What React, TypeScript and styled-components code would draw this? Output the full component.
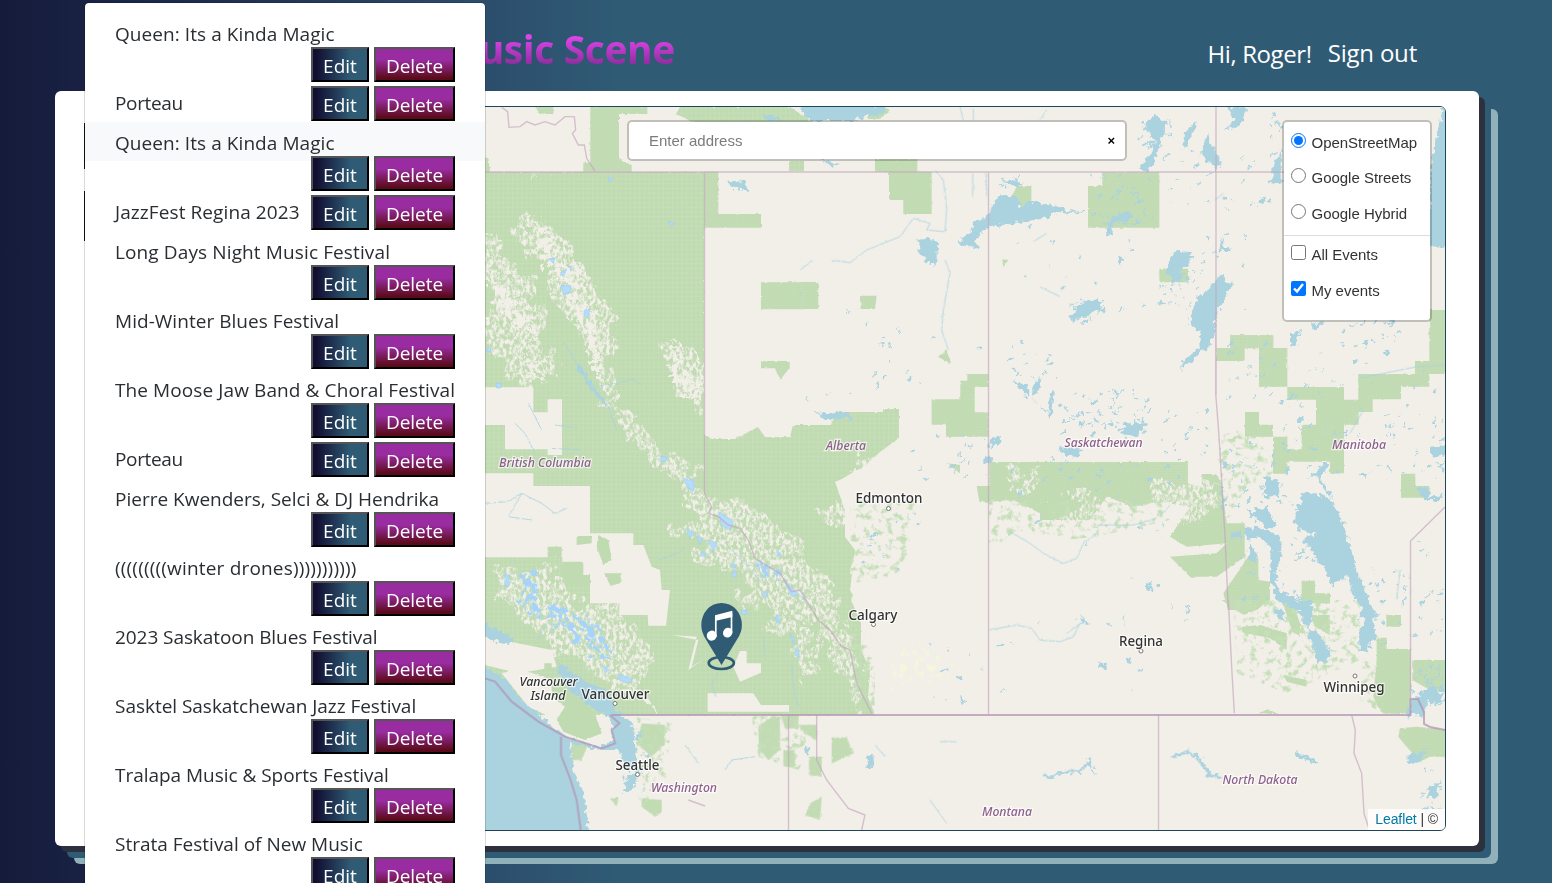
import React from "react";
import styled, { createGlobalStyle } from "styled-components";

const GlobalStyle = createGlobalStyle`
  * { box-sizing: border-box; }
  body { margin: 0; overflow: hidden; font-family: "Open Sans", "Noto Sans", sans-serif; }
`;

const Page = styled.div`
  position: relative;
  width: 1552px;
  height: 883px;
  overflow: hidden;
  background: linear-gradient(90deg, #151b3b 0, #1f2c4f 200px, #2c4d6c 480px, #2f5b75 620px);
`;

const Header = styled.header`
  height: 91px;
  padding: 6px 135px 0 430px;
  display: flex;
  align-items: center;
  justify-content: space-between;
`;

const Brand = styled.h1`
  margin: 0;
  width: 245px;
  display: flex;
  justify-content: flex-end;
  white-space: nowrap;
  font-size: 39px;
  line-height: 54px;
  font-weight: 700;
  letter-spacing: -0.4px;
  background: linear-gradient(180deg, #dd45ea 22%, #dd45ea 28%, #8e2c9c 80%);
  background-clip: text;
  -webkit-background-clip: text;
  color: transparent;
`;

const Account = styled.nav`
  display: flex;
  gap: 16px;
  padding-top: 9px;
  color: #fff;
  font-size: 24px;
  line-height: 32px;
  white-space: nowrap;
`;

const Greeting = styled.span`
  padding-top: 1px;
  letter-spacing: -0.4px;
`;

const SignOut = styled.span`
  letter-spacing: -0.2px;
`;

const Card = styled.main`
  width: 1424px;
  height: 755px;
  margin-left: 55px;
  padding: 15px 33px 15px;
  border-radius: 6px;
  background: #fff;
  box-shadow: 6px 6px #2d303d, 12px 12px #2f5b75, 19px 18px #90b1b9;
`;

const MapFrame = styled.section`
  position: relative;
  height: 725px;
  border: 1px solid #20455a;
  border-radius: 6px;
  overflow: hidden;
  background: #f2efe9;
  font-family: "Liberation Sans", Arial, sans-serif;
`;

const MapCanvas = styled.svg`
  display: block;
  width: 1356px;
  height: 723px;
`;

const SearchBox = styled.div`
  position: absolute;
  top: 13px;
  left: 538px;
  width: 500px;
  height: 41px;
  padding: 0 10px 0 20px;
  display: flex;
  align-items: center;
  justify-content: space-between;
  border: 2px solid rgba(0, 0, 0, 0.2);
  border-radius: 5px;
  background: #fff;
  background-clip: padding-box;
  color: #7c7c7c;
  font-size: 15px;
`;

const ClearMark = styled.span`
  color: #000;
  font-size: 13px;
  font-weight: 700;
`;

const LayerPanel = styled.form`
  position: absolute;
  top: 13px;
  right: 13px;
  width: 150px;
  height: 202px;
  border: 2px solid rgba(0, 0, 0, 0.2);
  border-radius: 5px;
  background: #fff;
  background-clip: padding-box;
  color: #333;
  font-size: 15px;
`;

const LayerGroup = styled.div<{ $divided?: boolean }>`
  display: flex;
  flex-direction: column;
  gap: 11.4px;
  padding: ${(p) => (p.$divided ? "7.5px 7px" : "9px 7px 9.2px")};
  border-top: ${(p) => (p.$divided ? "1px solid #ddd" : "none")};
`;

const LayerOption = styled.label`
  display: flex;
  align-items: flex-start;
  height: 24px;
  line-height: 24px;
  letter-spacing: -0.02px;
  white-space: nowrap;
  input { width: 15px; height: 15px; margin: 2px 5.5px 0 0; flex: none; }
`;

const Attribution = styled.div`
  position: absolute;
  right: 0;
  bottom: 0;
  padding: 0 7px 1px 7px;
  background: rgba(255, 255, 255, 0.8);
  color: #333;
  font-size: 14px;
  line-height: 20px;
  letter-spacing: -0.1px;
  white-space: nowrap;
  span { color: #0078a8; }
`;

const HiddenControl = styled.span<{ $top: number; $height: number }>`
  position: absolute;
  left: 84px;
  top: ${(p) => p.$top}px;
  width: 20px;
  height: ${(p) => p.$height}px;
  background: #111;
`;

const Menu = styled.ul`
  position: absolute;
  top: 2px;
  left: 84px;
  width: 402px;
  height: 900px;
  margin: 0;
  padding: 10px 0 0;
  list-style: none;
  border: 1px solid rgba(0, 0, 0, 0.15);
  border-radius: 5px;
  background: #fff;
  background-clip: padding-box;
`;

const MenuRow = styled.li<{ $wrapped: boolean }>`
  display: flex;
  flex-wrap: wrap;
  justify-content: space-between;
  align-content: flex-start;
  height: ${(p) => (p.$wrapped ? 69 : 40)}px;
`;

const EventName = styled.span<{ $active?: boolean; $wrapped: boolean; $track: number }>`
  width: ${(p) => (p.$wrapped ? "100%" : "226px")};
  height: 39px;
  padding-left: 30px;
  line-height: 42px;
  font-size: 19px;
  letter-spacing: ${(p) => p.$track}px;
  color: #2a2e32;
  white-space: nowrap;
  background: ${(p) => (p.$active ? "#f8f9fa" : "transparent")};
`;

const Actions = styled.div<{ $wrapped: boolean }>`
  margin: ${(p) => (p.$wrapped ? "-5px 30px 0 auto" : "4px 30px 0 0")};
  height: 35px;
  display: flex;
  gap: 5px;
`;

const ActionButton = styled.button<{ $kind: "edit" | "delete" }>`
  width: ${(p) => (p.$kind === "edit" ? 58 : 81)}px;
  height: 35px;
  padding: 2px 0 0;
  border: 2px outset #000;
  border-color: #555 #000 #000 #555;
  background: ${(p) =>
    p.$kind === "edit"
      ? "linear-gradient(90deg, #110e31 5%, #2f5b75 70%)"
      : "linear-gradient(180deg, #9a2ca2 35%, #5a0a18 96%)"};
  color: #fff;
  font-family: "Open Sans", "Noto Sans", sans-serif;
  font-size: 19px;
  font-weight: 500;
  line-height: 28px;
  letter-spacing: ${(p) => (p.$kind === "edit" ? 0 : -0.05)}px;
  text-align: center;
  white-space: nowrap;
`;

type Piece = [frame: keyof typeof frames, d: string];

const frames = {
  page: "",
  nw: "translate(485 100) scale(.33333)",
  mid: "translate(800 150) scale(.33333)",
  east: "translate(1150 310) scale(.33333)",
  sw: "translate(485 450) scale(.33333)",
  south: "translate(850 500) scale(.33333)",
  se: "translate(1200 600) scale(.33333)",
  ne: "translate(860 100) scale(.33333)",
};

const forests: Piece[] = [
  ["page", "M470 172H704V434L712 439H735L758 427L765 437H790L793 425H831L836 412H883V409H899V438L880 452L866 465L840 480L845 510V537L857 547L850 570L855 590L851 600L861 623V650L870 670L868 697L875 715H470Z"],
  ["nw", "M150 20H205V42H165ZM316 20H487V42H402V178L440 195V215H295V188H316ZM658 215H700V342H828V383H658ZM828 547H960V628H828ZM828 783H914V803L885 840L870 805H828ZM-9 175L10 172L15 215H-9Z"],
  ["page", "M680 107H790L822 128H705L676 114ZM789 161H804V171H789ZM868 115L884 107L890 110L880 119H868Z"],
  ["ne", "M45 178H172V215H45ZM87 215H215V342H130V300H87ZM0 587H50L45 627H2V600H0ZM684 258H727V217H898V383H684ZM898 506H984V547H898ZM471 258H514V300L490 325L455 290ZM427 478L445 480L430 502ZM1111 706H1240V745H1111Z"],
  ["mid", "M0 396H55V477H0ZM481 692H502V672H565V711H524V787H565V860H438V824H395V748H481ZM414 620L440 600L453 642ZM568 936H1163V1008L1200 1010V1070L1100 1050L1000 1070L920 1040L870 1110H720V1090L640 1050L568 1055ZM530 1008H568V1055H538ZM440 940L480 945V970Z"],
  ["east", "M198 114H241V76H369V114H412V230H327V114H284V153H198ZM412 231H582V269H625V192H795V153H838V0H900V153L882 192H838V230H753V268H668V306H626V344H582V490H540V455H412V491H369V380H285V344H369V380H412V418H455V344H498V269H412ZM285 306H327V344H285ZM753 491H796V528H838V563H753ZM0 456H113V520L155 530L157 492H197L215 520L230 640H284V740L200 800H120L60 740L200 730L230 700L110 710L60 680L120 590L0 570ZM295 740L325 745V810L360 815V870L320 900H235L220 850ZM455 812H495V850H540V880H455Z"],
  ["se", "M127 80L180 75L260 100V150L210 115L127 97ZM65 0H170V30L130 45ZM245 0H275L300 70V110L275 90ZM330 45H389V105L345 80ZM559 45H603V80H559ZM530 113H560V147H632V343L545 340L520 290L530 180ZM637 180H750V280L690 270L637 240ZM600 385L650 380L750 390V470H690L660 485L620 440L595 410ZM175 340L205 328L235 342ZM250 225L320 240V260L260 245ZM350 0H389V10H350Z"],
  ["sw", "M470 820L540 825V880L500 920L455 880ZM260 870L310 880L290 930H260ZM470 1045L530 1050V1090L510 1100L470 1070ZM820 830L860 800H885V900L850 930L822 900ZM880 770H940V835H900ZM940 825H995V870L960 850ZM972 920H1010V980L972 975ZM1040 862H1085L1105 910L1040 940ZM975 1060L1010 1040L1005 1110L960 1095ZM895 900H930V950H895ZM375 1045L400 1042L395 1070Z"],
];

const clearings: Piece[] = [
  ["nw", "M0 862H145V937H188V898H231V1065H188V1048H60V975H0Z"],
  ["sw", "M0 70H145V108H315V250H445V285H475L500 350L525 360L530 420H555L543 527H490L488 495H403V460H315V375H295V340H232V320L190 322H0ZM765 603H785V640H828V668L765 695L745 650ZM668 730H805L828 765H912V785H668ZM0 560L200 600L215 650L100 670L0 645Z"],
  ["sw", "M1050 95L1200 40V480H1130L1095 420L1110 300L1080 260V180ZM610 660L635 560L560 555L640 570L620 650L660 625Z"],
];

const islands: Piece[] = [["sw", "M50 670L100 655L200 690L270 750L340 800L358 850L300 875L230 850L215 810L130 770L90 720Z"]];
const islandForest: Piece[] = [["sw", "M200 705L240 710L330 790L350 850L300 870L235 845L215 810L240 770L200 740ZM275 258H320V280L275 285ZM188 290H230V322H188ZM232 335H293V375H315V408H255L232 380ZM340 255L370 270L380 330L355 345L335 290ZM360 370H410L405 400L375 408ZM178 640H200V660H178Z"]];

const mountains: Piece[] = [
  ["nw", "M180 230H198L190 275ZM110 335L160 350L215 400L290 480L330 570L390 640L395 740L350 780L380 900L450 960L600 1100L540 1110L410 980L350 890L310 740L240 640L190 540L90 420ZM0 400L90 480L190 720L200 850L120 850L0 780ZM560 720L600 740L658 800V930L600 900L560 850Z"],
  ["sw", "M500 0L620 60L700 150L860 200L990 330L1080 480L1110 620L1150 790L1100 740L1040 590L930 480L800 400L690 330L560 240L640 210L600 130ZM20 350L160 350L250 440L400 480L500 560L480 700L500 780L400 740L300 650L200 590L60 470ZM740 300L820 400L990 570L970 700L880 560L760 420Z"],
  ["mid", "M150 960L230 930L300 1000L250 1110H60ZM640 980L740 960L720 1000L650 1030ZM760 1060L880 1040L1000 1080L1200 1050V1110H740Z"],
  ["east", "M0 540L120 520L220 560L120 590L60 640L0 600Z"],
];

const snowfields: Piece[] = [
  ["nw", "M120 345L150 350L165 385L150 385ZM165 355L195 390L225 440L210 490L290 490L300 550L260 560L230 520L190 520L170 440ZM560 720L590 750L600 800L658 850V905L600 880L565 850L575 790ZM20 530L70 560L130 640L170 720L120 700L40 610ZM120 770L180 810L185 850L140 830Z"],
  ["nw", "M240 590L290 570L330 640L350 760L360 860L330 800L310 700Z"],
];

const sparse: Piece[] = [
  ["south", "M0 0H200L160 230L40 240L0 260ZM415 0H960V60L740 110L640 120L500 90L415 160ZM0 400H40L75 500V640L0 620Z"],
  ["se", "M100 0H480V180L350 240L260 280L110 220ZM490 160L530 180V330L480 300Z"],
  ["east", "M203 380L290 355L369 440V490L290 530L230 640L200 560Z"],
  ["sw", "M440 800L560 820L540 1000L470 1080L440 960ZM800 800L900 790L1000 850L940 960L820 920Z"],
];

const water: Piece[] = [
  ["sw", "M-30 635L0 650L60 685L110 745L160 790L225 850L340 890L385 870L375 800L310 765L250 720L215 660L225 640L300 695L370 720L385 775L440 820L450 880L455 940L430 960L400 900H350L255 880L265 960L300 1045L310 1150H-30ZM-20 520L0 520L85 565V585L40 575L-20 550ZM420 990L470 950L440 1020L415 1030Z"],
  ["mid", "M468 280L505 255L520 215L550 210L600 135L645 140L665 172L695 155L760 165L800 180L858 183V189L770 186L740 205L665 215L625 222L565 232L525 270L535 298L505 290ZM355 270L385 262L418 285L410 300L410 343L390 345L360 310ZM45 787L95 790L120 783L145 787L158 810L120 805L75 810ZM640 688L680 705L690 745L675 735ZM700 690L725 685L715 730L700 735ZM970 820L1040 820L1010 860H970ZM1120 310L1175 300L1165 345L1140 360L1150 390L1115 395L1100 350ZM930 210L960 190L990 185L995 205L940 220L930 260L920 240ZM810 500L850 455L900 450V480L820 515ZM750 730L765 720L755 805L690 740L745 790ZM575 870L600 857L605 880L565 890ZM550 920L575 920V940L550 935ZM955 325L975 320L960 352ZM780 890L850 900L830 925L775 905Z"],
  ["ne", "M0 20H78L70 40L0 50ZM860 70L885 40L920 75L905 115L880 190L855 220L840 205L875 160L885 110L850 90ZM965 150L975 95L1010 60L1005 90ZM1020 165L1040 105L1060 140L1083 190L1070 215L1050 185ZM1090 90L1130 60L1100 22H1160L1140 75ZM1230 250L1240 200L1265 150V250ZM1075 455L1090 405V440L1118 450ZM990 650L1015 590L1050 565L1085 520L1110 560L1090 610L1070 635L1065 700L1040 750H1015L1025 700L1000 680ZM430 240L490 245L470 265Z"],
  ["page", "M804 100H878L868 117L850 121H812L801 112ZM761 114L778 117L782 121H768ZM727 182L745 180L748 191L735 189ZM821 160L841 163L832 166ZM1430 175L1442 107L1455 100V245L1430 247Z"],
  ["east", "M125 0H190L195 50L185 100L150 130L105 165L90 190L105 150L150 110L160 70ZM455 550L500 547L550 575L590 670L620 780L640 830L665 900H640L605 850L595 800L545 825L530 780L500 750L463 685L500 670L440 660L435 630ZM525 460H540L510 500L550 570L520 535L500 500H480ZM290 605L350 590L380 650L350 655ZM283 655L320 650L390 680L395 740L375 780L385 840L430 860L470 900H440L380 870L360 800L365 720L325 680L290 690ZM840 410L885 405V440L840 435ZM800 535L835 530L840 560L880 555V570L820 570ZM420 75L450 60L440 110L420 105ZM620 490L660 488L645 508ZM345 500L385 510V560L345 565ZM490 40L520 30V45L490 65ZM300 700L320 730V760L300 750Z"],
  ["se", "M325 85L355 100L392 155L385 185L345 188V155L325 110ZM500 0L535 55L520 60L530 120L510 125L505 160L478 155V90L500 55H475ZM222 15L250 40L252 65L230 50ZM300 0H330L340 60L320 90L300 40ZM620 340L640 300L700 250L730 300L700 310L680 300L670 350L640 335L625 360ZM622 470L665 450L685 448L665 470V488H625ZM680 570L720 540L710 590H685ZM285 455L310 465L355 480V490L290 470Z"],
  ["south", "M740 490L770 492V510L755 508ZM885 250L900 245L905 270L890 272ZM915 250L930 250V260L915 262ZM50 770L70 765L72 808L50 805ZM690 345L720 375L700 370ZM330 590L342 600L335 612ZM1145 95H1170V118H1145ZM1180 80L1200 90V130ZM820 330L822 370L838 400L820 370ZM700 785L725 775L735 830L725 800Z"],
  ["sw", "M1150 920L1165 915V960L1150 955ZM955 890L975 895L970 920L960 905Z"],
];

const rivers: Piece[] = [
  ["nw", "M235 725L275 790L320 860L370 920L395 990M320 860L400 850L440 838L470 855M130 910L170 990M90 970L120 1000L150 1060M210 975L280 985M200 1045L285 1050M305 815V850"],
  ["sw", "M0 160L70 155L110 130L170 160L210 190L245 175M110 130L70 200L140 210M300 480L310 520M835 560L840 620M920 640L930 740L940 765M700 670L680 700L692 740M190 510L160 570M520 330L580 310L600 290M730 290L790 350L830 400M600 885L640 940M720 960L740 930L810 920"],
  ["mid", "M95 330L150 338L200 300L300 260L340 205L390 220L380 240L435 245L440 180L430 90L405 60M435 330L450 370L430 480L425 540L445 600M0 360L40 330"],
  ["ne", "M560 400L520 425M540 560L600 590M1065 300L1090 280M300 20L310 60M340 25V60M540 60L560 30M338 220V290M378 220L380 290"],
  ["south", "M480 95L540 130L580 160L640 190L680 175L700 130L745 95M415 390L500 375L545 385L570 420L630 425L670 410L690 370L715 370M650 400L700 365M965 770L1020 755L1050 790L1080 825L1130 835M270 725H320M240 900L290 970M930 50L960 15M740 75L850 75L920 55M75 735L105 770"],
  ["east", "M625 205L700 190L800 170L885 165M750 780L740 870M640 300L600 370"],
];

const channels: Piece[] = [
  ["nw", "M275 790L320 860L370 920"],
  ["south", "M580 825L600 835L640 815L690 815L720 780M965 770L1020 755L1050 780L1080 825L1115 835"],
];

const provinces: Piece[] = [
  ["page", "M485 172H1284M704.5 172V494M988.5 172V714M1216 107V395M1158.5 715V830M788.5 715V830M1410.5 698V541L1445 507"],
  ["nw", "M50 22L68 35L72 82L105 80L125 65L150 75L180 65L210 75L240 50L268 50L272 90L262 100L280 135H298L305 175L330 213"],
  ["sw", "M658 130L680 170L670 190L700 200L730 225L765 235L790 270L810 325L850 350L885 370L920 425L945 420L1000 510L1035 540L1070 590L1095 600L1115 700L1160 790M995 795V930L1025 990L1090 1075L1140 1095L1130 1140M610 1050L660 1068"],
  ["east", "M197 0V250L205 350L212 460L225 680L235 900"],
  ["se", "M85 0L95 200L103 340M455 345L466 390L462 460L485 520L492 640L505 680"],
];

const countries: Piece[] = [
  ["page", "M611 715H1410.5V699L1418 699L1424 712V724L1430 727L1445 730"],
  ["sw", "M375 795L403 820L380 840L390 880L350 895L240 860L160 815L80 755L30 695L0 685M228 860V915L255 985L275 1050L287 1140"],
];

const glaciers: Piece[] = [
  ["nw", "M193 476L210 474L205 490ZM225 520L245 508L235 530ZM250 498L262 500L255 510ZM228 557H258V575L235 583ZM298 632L315 628L308 655L298 645ZM5 745H18V755H8ZM33 850H48V864H35ZM550 365L568 370L560 380ZM528 1070H544V1083H528ZM370 233H382V243H370Z"],
  ["sw", "M60 375H72V408H60ZM355 645L372 660L360 668ZM400 672L440 688L438 698L405 692ZM595 85L625 90L628 122L610 115ZM605 240L625 245L615 265ZM670 270L695 280L685 305ZM635 255L650 265L645 285ZM700 185L745 215L735 240L710 225ZM875 300L890 315L880 320ZM740 335L752 345L740 380L755 380ZM900 395L940 430L920 440ZM945 435L970 460ZM835 425H845V440H835ZM870 500L885 495L880 525ZM935 590L945 625L930 610ZM915 550L928 565V588ZM648 305L668 312L650 320ZM770 480H785V492H770Z"],
];

const icefields: Piece[] = [
  ["sw", "M105 365L160 360V410L165 440L175 515L145 515L135 475L95 465L125 420ZM185 465L230 460L285 500L345 522L360 560L390 610L365 628L315 620L320 580L260 582L270 560L245 530L205 545Z"],
  ["sw", "M810 325L850 345L905 370L885 395L830 375Z"],
];

function Shapes({ items }: { items: Piece[] }) {
  return (
    <>
      {items.map(([frame, d], i) => (
        <path key={i} d={d} transform={frames[frame] || undefined} vectorEffect="non-scaling-stroke" />
      ))}
    </>
  );
}

/* x, y, width, height, number of ponds */
const pondZones: number[][] = [
  [1060, 390, 90, 45, 60], [1010, 340, 50, 40, 20], [1160, 410, 50, 50, 22], [1220, 440, 70, 70, 50],
  [1370, 400, 74, 80, 40], [1290, 500, 30, 60, 20], [1270, 110, 12, 80, 16], [1140, 110, 35, 50, 24],
  [1170, 150, 110, 60, 22], [1160, 250, 45, 60, 34], [1000, 460, 190, 40, 32], [1280, 385, 80, 90, 36],
  [1225, 340, 60, 60, 22], [1240, 540, 60, 60, 26], [1410, 660, 34, 50, 50], [1400, 540, 44, 100, 24],
  [1420, 770, 25, 40, 12], [910, 430, 80, 50, 18], [860, 330, 120, 60, 14], [800, 290, 100, 110, 12],
  [1090, 175, 68, 50, 36], [1070, 300, 34, 22, 24], [860, 510, 60, 60, 15], [1000, 220, 150, 90, 16],
  [620, 730, 28, 60, 30], [1000, 520, 200, 110, 16], [1290, 350, 150, 50, 18], [1340, 320, 60, 30, 18],
  [995, 175, 35, 15, 14], [1170, 230, 80, 100, 14], [900, 640, 250, 60, 16], [1360, 565, 40, 80, 20],
];

function seeded(seed: number) {
  let s = seed;
  return () => {
    s = (s * 16807) % 2147483647;
    return s / 2147483647;
  };
}

const ponds = pondZones.flatMap(([x, y, w, h, n], z) => {
  const rand = seeded(71 + z * 997);
  return Array.from({ length: n }, () => ({
    cx: x + rand() * w,
    cy: y + rand() * h,
    rx: 0.7 + rand() * rand() * 3.6,
    ry: 0.5 + rand() * 1.1,
    turn: -60 + rand() * 50,
  }));
});

const places: { x: number; y: number; name: string; kind: "city" | "province" | "island"; dot?: [number, number]; width: number }[] = [
  { x: 545, y: 467, name: "British Columbia", kind: "province", width: 92 },
  { x: 846, y: 450, name: "Alberta", kind: "province", width: 40 },
  { x: 1103.5, y: 447, name: "Saskatchewan", kind: "province", width: 78 },
  { x: 1359, y: 448.5, name: "Manitoba", kind: "province", width: 54 },
  { x: 684, y: 792, name: "Washington", kind: "province", width: 66 },
  { x: 1007, y: 816, name: "Montana", kind: "province", width: 50 },
  { x: 1260, y: 784, name: "North Dakota", kind: "province", width: 75 },
  { x: 548.5, y: 685.5, name: "Vancouver", kind: "island", width: 58 },
  { x: 548, y: 700, name: "Island", kind: "island", width: 35 },
  { x: 889, y: 503, name: "Edmonton", kind: "city", dot: [888.5, 508.5], width: 67 },
  { x: 873, y: 619.5, name: "Calgary", kind: "city", dot: [873.5, 624.5], width: 49 },
  { x: 1141, y: 646, name: "Regina", kind: "city", dot: [1141, 651], width: 44 },
  { x: 615.5, y: 698.5, name: "Vancouver", kind: "city", dot: [615, 703.5], width: 68 },
  { x: 637.5, y: 769.5, name: "Seattle", kind: "city", dot: [637.5, 774.5], width: 44 },
  { x: 1354, y: 691.5, name: "Winnipeg", kind: "city", dot: [1355, 676], width: 61 },
];

function RegionMap() {
  return (
    <MapCanvas viewBox="89 107 1356 723">
      <defs>
        <pattern id="grid" width="4.7" height="4.7" patternUnits="userSpaceOnUse">
          <path d="M0 0H4.7M0 0V4.7" stroke="#e3edd6" strokeWidth=".8" opacity=".4" />
        </pattern>
        <filter id="shore" x="0" y="0" width="100%" height="100%">
          <feTurbulence type="fractalNoise" baseFrequency=".2" numOctaves="2" seed="4" />
          <feDisplacementMap in="SourceGraphic" scale="9" xChannelSelector="R" yChannelSelector="G" />
        </filter>
        <filter id="edge" x="0" y="0" width="100%" height="100%">
          <feTurbulence type="fractalNoise" baseFrequency=".25" numOctaves="2" seed="9" />
          <feDisplacementMap in="SourceGraphic" scale="2.5" xChannelSelector="R" yChannelSelector="G" />
        </filter>
        <filter id="ridges" x="-5%" y="-5%" width="110%" height="110%">
          <feTurbulence type="fractalNoise" baseFrequency=".3 .2" numOctaves="4" seed="7" result="n" />
          <feTurbulence type="fractalNoise" baseFrequency=".04" numOctaves="3" seed="3" result="w" />
          <feColorMatrix in="n" values="0 0 0 0 0 0 0 0 0 0 0 0 0 0 0 3 3 0 0 -2.6" result="m" />
          <feDisplacementMap in="SourceGraphic" in2="w" scale="50" xChannelSelector="R" yChannelSelector="B" result="s" />
          <feComposite in="s" in2="m" operator="in" />
        </filter>
        <filter id="snow" x="-5%" y="-5%" width="110%" height="110%">
          <feTurbulence type="fractalNoise" baseFrequency=".18" numOctaves="4" seed="17" result="n" />
          <feColorMatrix in="n" values="0 0 0 0 0 0 0 0 0 0 0 0 0 0 0 6 0 0 0 -2.2" result="m" />
          <feDisplacementMap in="SourceGraphic" in2="n" scale="24" xChannelSelector="R" yChannelSelector="B" result="s" />
          <feComposite in="s" in2="m" operator="in" />
        </filter>
        <filter id="ice" x="-5%" y="-5%" width="110%" height="110%">
          <feTurbulence type="fractalNoise" baseFrequency=".16" numOctaves="3" seed="21" result="n" />
          <feColorMatrix in="n" values="0 0 0 0 0 0 0 0 0 0 0 0 0 0 0 9 0 0 0 -4.1" result="m" />
          <feDisplacementMap in="SourceGraphic" in2="n" scale="12" xChannelSelector="R" yChannelSelector="G" result="s" />
          <feComposite in="s" in2="m" operator="in" />
        </filter>
        <filter id="speckle" x="0" y="0" width="100%" height="100%">
          <feTurbulence type="fractalNoise" baseFrequency=".14" numOctaves="4" seed="12" result="n" />
          <feColorMatrix in="n" values="0 0 0 0 0 0 0 0 0 0 0 0 0 0 0 5 0 0 0 -2.6" result="m" />
          <feComposite in="SourceGraphic" in2="m" operator="in" />
        </filter>
      </defs>
      <rect x="89" y="107" width="1356" height="723" fill="#f2efe9" />
      <g fill="#c0dbb2" filter="url(#edge)"><Shapes items={forests} /></g>
      <g fill="url(#grid)">
        {forests.map(([frame, d], i) => (
          <path key={i} d={d} transform={frames[frame] || undefined} />
        ))}
      </g>
      <g fill="#f2efe9"><Shapes items={clearings} /></g>
      <g fill="#f2efe9" filter="url(#ridges)"><Shapes items={mountains} /></g>
      <g fill="#f2efe9" filter="url(#snow)"><Shapes items={snowfields} /></g>
      <g fill="#c5dfb8" filter="url(#speckle)"><Shapes items={sparse} /></g>
      <path d="M890 648L925 640L960 670L945 685L905 682L890 700Z" fill="#f7f5dc" filter="url(#speckle)" />
      <g fill="#aad3df" filter="url(#shore)">
        <Shapes items={water} />
        {ponds.map((p, i) => (
          <ellipse key={i} cx={p.cx} cy={p.cy} rx={p.rx} ry={p.ry} transform={`rotate(${p.turn} ${p.cx} ${p.cy})`} />
        ))}
      </g>
      <g fill="#f2efe9" filter="url(#edge)"><Shapes items={islands} /></g>
      <g fill="#c0dbb2" filter="url(#edge)"><Shapes items={islandForest} /></g>
      <g fill="none" stroke="#aad3df" strokeWidth="1" opacity=".85" filter="url(#edge)"><Shapes items={rivers} /></g>
      <g fill="none" stroke="#aad3df" strokeWidth="3" filter="url(#shore)"><Shapes items={channels} /></g>
      <g fill="#b5dcfa" stroke="#9bcdfb" strokeWidth=".7" filter="url(#edge)"><Shapes items={glaciers} /></g>
      <g fill="#a5d3fc" filter="url(#ice)"><Shapes items={icefields} /></g>
      <g fill="none" stroke="#c3a5bd" strokeWidth="1.4" opacity=".65"><Shapes items={provinces} /></g>
      <g fill="none" stroke="#b394b4" strokeWidth="2" opacity=".75"><Shapes items={countries} /></g>
      {places.map((p, i) => (
        <g key={i}>
          {p.dot && <circle cx={p.dot[0]} cy={p.dot[1]} r="2" fill="#fff" stroke="#777" strokeWidth="1" />}
          <text
            x={p.x}
            y={p.y}
            textAnchor="middle"
            textLength={p.width}
            lengthAdjust="spacingAndGlyphs"
            fontFamily="Noto Sans, sans-serif"
            fontSize={p.kind === "city" ? 13.8 : 12.6}
            fontWeight="500"
            fontStyle={p.kind === "city" ? "normal" : "italic"}
            fill={p.kind === "province" ? "#8d618b" : "#333"}
            stroke="#fff"
            strokeOpacity=".65"
            strokeWidth="2.5"
            paintOrder="stroke"
          >
            {p.name}
          </text>
        </g>
      ))}
      <ellipse cx="721.3" cy="663" rx="12.6" ry="6" fill="none" stroke="#2f5b75" strokeWidth="2.6" />
      <path d="M721.5 665L706 639.5Q701.3 632.5 701.3 625A20.200 22 0 0 1 741.900 625Q741.900 632.5 737 639.5Z" fill="#2f5b75" />
      <path d="M715.800 616.500V637M731.500 612.500V633" fill="none" stroke="#fff" strokeWidth="1.7" />
      <path d="M715 615.300L732.300 610.800V617L715 621Z" fill="#fff" />
      <ellipse cx="711.700" cy="635.600" rx="4.900" ry="5.100" transform="rotate(35 711.700 635.600)" fill="#fff" />
      <ellipse cx="727.700" cy="632.600" rx="4.500" ry="5.100" transform="rotate(35 727.700 632.600)" fill="#fff" />
    </MapCanvas>
  );
}

const events: { name: string; wrapped: boolean; active?: boolean; track?: number }[] = [
  { name: "Queen: Its a Kinda Magic", wrapped: true, track: 0.07 },
  { name: "Porteau", wrapped: false, track: -0.35 },
  { name: "Queen: Its a Kinda Magic", wrapped: true, active: true, track: 0.07 },
  { name: "JazzFest Regina 2023", wrapped: false, track: 0.09 },
  { name: "Long Days Night Music Festival", wrapped: true, track: 0.12 },
  { name: "Mid-Winter Blues Festival", wrapped: true, track: 0.04 },
  { name: "The Moose Jaw Band & Choral Festival", wrapped: true, track: 0.1 },
  { name: "Porteau", wrapped: false, track: -0.35 },
  { name: "Pierre Kwenders, Selci & DJ Hendrika", wrapped: true },
  { name: "(((((((((winter drones)))))))))))", wrapped: true, track: 0.18 },
  { name: "2023 Saskatoon Blues Festival", wrapped: true, track: -0.07 },
  { name: "Sasktel Saskatchewan Jazz Festival", wrapped: true, track: -0.03 },
  { name: "Tralapa Music & Sports Festival", wrapped: true, track: -0.03 },
  { name: "Strata Festival of New Music", wrapped: true },
];

export default function App() {
  return (
    <>
      <GlobalStyle />
      <Page>
        <Header>
          <Brand>Music Scene</Brand>
          <Account>
            <Greeting>Hi, Roger!</Greeting>
            <SignOut>Sign out</SignOut>
          </Account>
        </Header>
        <Card>
          <MapFrame>
            <RegionMap />
            <SearchBox>
              <span>Enter address</span>
              <ClearMark>×</ClearMark>
            </SearchBox>
            <LayerPanel>
              <LayerGroup>
                <LayerOption><input type="radio" name="base" defaultChecked />OpenStreetMap</LayerOption>
                <LayerOption><input type="radio" name="base" />Google Streets</LayerOption>
                <LayerOption><input type="radio" name="base" />Google Hybrid</LayerOption>
              </LayerGroup>
              <LayerGroup $divided>
                <LayerOption><input type="checkbox" />All Events</LayerOption>
                <LayerOption><input type="checkbox" defaultChecked />My events</LayerOption>
              </LayerGroup>
            </LayerPanel>
            <Attribution><span>Leaflet</span> | ©</Attribution>
          </MapFrame>
        </Card>
        <HiddenControl $top={123} $height={46} />
        <HiddenControl $top={191} $height={50} />
        <Menu>
          {events.map((event, i) => (
            <MenuRow key={i} $wrapped={event.wrapped}>
              <EventName $active={event.active} $wrapped={event.wrapped} $track={event.track ?? 0}>
                {event.name}
              </EventName>
              <Actions $wrapped={event.wrapped}>
                <ActionButton $kind="edit">Edit</ActionButton>
                <ActionButton $kind="delete">Delete</ActionButton>
              </Actions>
            </MenuRow>
          ))}
        </Menu>
      </Page>
    </>
  );
}
